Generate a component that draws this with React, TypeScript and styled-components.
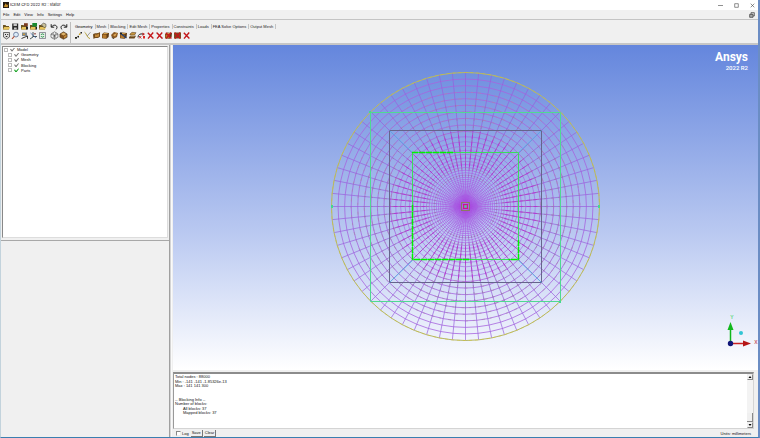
import React from "react";
import styled, { createGlobalStyle } from "styled-components";

const GlobalStyle = createGlobalStyle`
  *, *::before, *::after { box-sizing: border-box; }
  html, body, #root { height: 100%; margin: 0; }
  body {
    font: 4px/5px "Liberation Sans", Arial, sans-serif;
    color: #111;
    background: #f0f0f0;
    overflow: hidden;
  }
  button { font: inherit; color: inherit; background: none; border: 0; padding: 0; }
`;

const Window = styled.div`
  display: flex;
  flex-direction: column;
  height: 100vh;
  background: #f0f0f0;
  border-left: 1px solid #c3d3dc;
  border-right: 2px solid #6b8dc4;
  border-bottom: 1px solid #3b7fb0;
`;

const TitleBar = styled.header`
  display: flex;
  align-items: center;
  gap: 1px;
  height: 10px;
  padding: 0 3px 0 2px;
  background: #fff;
`;

const Title = styled.h1`
  flex: 1;
  margin: 0;
  font: 400 4px/6px Inter, sans-serif;
`;

const WindowButtons = styled.div`
  display: flex;
  gap: 11px;
`;

const WindowButton = styled.button`
  width: 5px;
  height: 6px;
  svg { display: block; width: 5px; height: 5px; }
`;

const MenuBar = styled.nav`
  display: flex;
  align-items: center;
  gap: 4px;
  height: 10px;
  padding: 0 3px 0 2px;
  border-bottom: 1px solid #c4c4c4;
  > :last-child { margin-left: auto; }
`;

const ToolArea = styled.div`
  display: flex;
  height: 25px;
  padding-top: 2px;
  border-bottom: 2px solid #c6c6c6;
`;

const QuickTools = styled.div`
  display: flex;
  gap: 3px;
  width: 70px;
  padding: 0 0 0 1px;
  border-right: 1px solid #bdbdbd;
`;

const ToolGrid = styled.div<{ $columns: number }>`
  display: grid;
  grid-template-columns: repeat(${(p) => p.$columns}, 9px);
  grid-auto-rows: 9px;
`;

const ToolButton = styled.button`
  width: 9px;
  height: 9px;
  svg { display: block; width: 9px; height: 9px; }
`;

const Ribbon = styled.div`
  display: flex;
  flex-direction: column;
  flex: 1;
  padding-left: 3px;
`;

const Tabs = styled.div`
  display: flex;
  align-items: center;
  height: 9px;
`;

const Tab = styled.button<{ $active?: boolean }>`
  padding: 0 2px 0 1px;
  border-right: 1px solid #c4c4c4;
  color: ${(p) => (p.$active ? "#000" : "#222")};
`;

const RibbonTools = styled.div`
  display: flex;
`;

const Main = styled.div`
  flex: 1;
  min-height: 0;
  display: grid;
  grid-template-columns: 168px 3px minmax(0, 1fr);
`;

const Side = styled.aside`
  display: flex;
  flex-direction: column;
`;

const TreePanel = styled.div`
  flex: 0 0 49%;
  padding: 0 1px;
  margin: 1px 1px 0 1px;
  background: #fff;
  border: 1px solid #ddd;
  border-left-color: #888;
  border-top-color: #888;
`;

const SideSplit = styled.div`
  height: 1px;
  margin-top: 2px;
  background: #a8a8a8;
`;

const Tree = styled.ul`
  display: grid;
  grid-auto-rows: 1fr;
  height: 26px;
  margin: 0;
  padding: 0;
  list-style: none;
`;

const TreeRow = styled.li<{ $level: number }>`
  display: flex;
  align-items: center;
  gap: 2px;
  padding-left: ${(p) => p.$level * 4}px;
`;

const Expander = styled.button`
  width: 4px;
  height: 4px;
  border: 1px solid #bbb;
`;

const TreeLabel = styled.label`
  display: flex;
  align-items: center;
  gap: 2px;
`;

const TreeCheck = styled.input<{ $green?: boolean }>`
  appearance: none;
  width: 5px;
  height: 4px;
  margin: 0;
  &::before {
    content: "";
    display: block;
    width: 5px;
    height: 4px;
    background: ${(p) => (p.$green ? "#12a01e" : "#777")};
    clip-path: polygon(0 40%, 20% 30%, 40% 65%, 85% 0, 100% 10%, 45% 100%, 35% 100%);
  }
`;

const Sash = styled.div`
  border-left: 1px solid #a0a0a0;
  border-right: 1px solid #fafafa;
  background: #d5d5d5;
`;

const Work = styled.section`
  display: flex;
  flex-direction: column;
  min-width: 0;
  padding-left: 1px;
`;

const Viewport = styled.div`
  position: relative;
  flex: 1;
  min-height: 0;
  background: linear-gradient(#6486dd, #bac9f1 58%, #fff);
`;

const Scene = styled.svg`
  display: block;
  width: 100%;
  height: 100%;
`;

const Brand = styled.div`
  position: absolute;
  top: 5px;
  right: 10px;
  color: #fff;
  text-align: right;
  font: 500 6px/8px Roboto, sans-serif;
  strong { display: block; font-size: 12px; font-weight: 700; line-height: 14px; }
`;

const Console = styled.div`
  display: flex;
  height: 57px;
  margin-right: 4px;
  margin-top: 2px;
  background: #fff;
  border: 1px solid #d4d4d4;
  border-top: 2px solid #8c8c8c;
  border-left-color: #999;
`;

const Log = styled.div`
  flex: 1;
  display: grid;
  grid-auto-rows: 1fr;
  height: 41px;
  padding-left: 1px;
  margin-top: 1px;
`;

const LogLine = styled.div<{ $indent?: boolean }>`
  min-height: 0;
  padding-left: ${(p) => (p.$indent ? 8 : 0)}px;
  white-space: pre;
  line-height: 4px;
`;

const ScrollBar = styled.div`
  display: flex;
  flex-direction: column;
  width: 6px;
  background: #f3f3f3;
`;

const ScrollArrow = styled.button`
  height: 6px;
  border: 1px solid #eee;
  border-right-color: #888;
  border-bottom-color: #888;
  svg { display: block; width: 4px; height: 4px; }
`;

const ScrollThumb = styled.div`
  height: 9px;
  margin-top: auto;
  background: #f0f0f0;
  border-right: 1px solid #888;
  border-bottom: 1px solid #888;
`;

const StatusBar = styled.footer`
  display: flex;
  align-items: center;
  gap: 1px;
  height: 8px;
  padding: 0 7px 0 3px;
`;

const LogLabel = styled.label`
  display: flex;
  align-items: center;
  gap: 1px;
  margin-right: 1px;
`;

const LogCheck = styled.input`
  appearance: none;
  width: 5px;
  height: 5px;
  margin: 0;
  background: #fff;
  border: 1px solid #eee;
  border-top-color: #888;
  border-left-color: #888;
`;

const SmallButton = styled.button`
  height: 7px;
  padding: 0 1px;
  border-right: 1px solid #777;
  border-bottom: 1px solid #777;
`;

const Units = styled.span`
  margin-left: auto;
`;

const folder = (
  <>
    <path d="M1 3h2.5l.7 1H7v3.5H1z" fill="#6b5420" />
    <path d="M2.2 5H8L7 7.5H1z" fill="#e6c35a" />
  </>
);
const block = (
  <>
    <path d="M1 3.2 3 1.6l5 .3-.4 4L5.6 7.8 1 7.2z" fill="#5d3a15" />
    <path d="M1.5 3.4h4v3.8l-4-.3z" fill="#b77a2c" />
    <path d="M1.8 3 3.2 2l4.2.2L5.8 3z" fill="#dba850" />
  </>
);
const cross = <path d="m1.8 1.8 5.6 5.8M7.2 1.5 2 7.6" stroke="#c4161a" strokeWidth="1.4" fill="none" />;

const icons: Record<string, React.ReactNode> = {
  open: folder,
  save: (
    <>
      <path d="M1.2 1.5h6v6.2h-6z" fill="#292929" />
      <path d="M2.5 1.5h3.4v2.4H2.5zM3 5.5h2.7v2H3z" fill="#c8c8c8" />
    </>
  ),
  geometryFile: (
    <>
      {folder}
      <path d="M4 1.2h3.8v3H4z" fill="#7a3b20" />
      <path d="M6 4.5h2v3H6z" fill="#222" />
    </>
  ),
  meshFile: (
    <>
      {folder}
      <path d="M3.3 1h4.7v3.6H3.3z" fill="#188a30" />
      <path d="M6.5 4.8H8v2.7H6.5z" fill="#222" />
    </>
  ),
  blockFile: (
    <>
      {folder}
      <path d="m3.5 2.5 2-1.4L8 2.2v2.6l-2 .9z" fill="#c9c19a" stroke="#333" strokeWidth=".5" />
    </>
  ),
  undo: <path d="M1.2 2.2v3h3M1.5 5c2-3 5.5-2 5.5.5 0 1-.5 1.5-1.2 2" fill="none" stroke="#222" strokeWidth="1" />,
  redo: <path d="M7.8 2.2v3h-3M7.5 5C5.5 2 2 3 2 5.5c0 1 .5 1.5 1.2 2" fill="none" stroke="#222" strokeWidth="1" />,
  fit: (
    <>
      <path d="M1.5 1.5h6v4.5l-3 2-3-2z" fill="#ddd" stroke="#333" strokeWidth=".7" />
      <path d="M3 3h1v1H3zM5.2 3h1v1h-1zM3.8 5h1.5v1H3.8z" fill="#222" />
    </>
  ),
  zoom: (
    <>
      <circle cx="5" cy="3.6" r="2.4" fill="#dcebf7" stroke="#5b6e93" strokeWidth=".8" />
      <path d="M3.3 5.4 1 8" stroke="#b04a30" strokeWidth="1.1" />
    </>
  ),
  measure: (
    <>
      <path d="M2 1.5h5v3.5H2z" fill="#7d8891" />
      <path d="M1.5 7.5 7.5 5v2.8" stroke="#222" fill="none" strokeWidth=".9" />
      <path d="M3 2.5h2v1.5H3z" fill="#c8963d" />
    </>
  ),
  axes: (
    <>
      <path d="M4 1v5l-3 2M4 5.5h4" stroke="#233" fill="none" strokeWidth=".8" />
      <path d="m1.5 2 5.5 5" stroke="#375fa5" strokeWidth=".7" />
      <path d="M5 2h2v1.5H5z" fill="#a77" />
    </>
  ),
  refresh: (
    <>
      <path d="M1.5 1.5h6v6h-6z" fill="#e6efe6" stroke="#556" strokeWidth=".6" />
      <path d="M3 4c.5-1.5 2.5-1.5 3 0M6 5c-.5 1.5-2.5 1.5-3 0" stroke="#1a8a3d" fill="none" strokeWidth=".9" />
    </>
  ),
  wire: (
    <path
      d="m4.5.8 3.4 2.1v3.4L4.5 8.3 1 6.3V3zM1 3l3.5 1.8L7.9 3M4.5 4.8v3.4M2.7 1.9l3.6 5.3M6.3 1.9 2.7 7.2"
      fill="#f4f4f4"
      stroke="#444"
      strokeWidth=".6"
    />
  ),
  solid: (
    <>
      <path d="m4.5.8 3.6 2.1v3.4L4.5 8.3.9 6.3V3z" fill="#80511e" stroke="#3d2a13" strokeWidth=".5" />
      <path d="m4.5 1.4 2.6 1.5-2.6 1.6-2.7-1.5z" fill="#dfb46b" />
      <path d="m5 5.3 2.5-1.5v2L5 7.3z" fill="#c78e3c" />
    </>
  ),
  point: (
    <>
      <path d="m2 7 4.5-5" stroke="#777" strokeWidth=".6" strokeDasharray="1 .7" />
      <path d="M1 6h2v1.7H1zM3.5 5H5v1.5H3.5z" fill="#25251c" />
      <path d="M5 2.5h1.5V4H5z" fill="#d8ad20" />
      <path d="M6.5 1H8v1.6H6.5z" fill="#222" />
    </>
  ),
  curve: (
    <>
      <path d="M1.5 1.2c2 .5 2 5.5 5.5 6.5" stroke="#b09a2c" strokeWidth=".9" fill="none" />
      <path d="M7.5 1.2 4.2 5" stroke="#777" strokeWidth=".7" />
    </>
  ),
  surface: (
    <>
      <path d="M1 3.5C3 1 5 3.5 8 1v4.5C6 8.2 3 6 1.5 8z" fill="#70491c" />
      <path d="M3 3.5C5 4 6 3.2 7 2.6v2.7C5.5 6.5 4 5.7 3 6.2z" fill="#c58b3b" />
    </>
  ),
  body: block,
  faceted: (
    <>
      <path d="m1 4 3-3 4 1-1 4-4 2z" fill="#8a5822" />
      <path d="m3 4 4-2-2 3.5z" fill="#e0ab58" />
      <path d="M1.5 6 4 7.8" stroke="#444" strokeWidth=".8" />
    </>
  ),
  repair: (
    <>
      {block}
      <path d="m1 2 6.5 5" stroke="#27426e" strokeWidth="1.4" />
      <path d="M1 1.5h2V3H1z" fill="#222" />
    </>
  ),
  transform: (
    <>
      <path d="m1 6 2-1.5 5 .3L6.5 7.5H1z" fill="#6a461d" />
      <path d="m2 3 2-1.7 4 .4L6.5 4H2z" fill="#c9963f" stroke="#4c3518" strokeWidth=".5" />
      <path d="M2.5 5h4" stroke="#f1dca0" strokeWidth=".7" />
    </>
  ),
  restore: (
    <>
      <path d="M1 6.5c0-3 2-4 5-3.5" stroke="#222" strokeWidth="1" fill="none" />
      <path d="m2 5 2.3 2.5M4.3 5 2 7.5" stroke="#b22" strokeWidth=".9" />
      <path d="M5.5 1.5 8 3 5.5 5z" fill="#b22" />
      <path d="M6 5h2v2.5H6z" fill="#d22" />
    </>
  ),
  deletePoint: cross,
  deleteCurve: (
    <>
      <path d="M1 1.5c3 .5 3 5 7 6" stroke="#777" strokeWidth=".6" fill="none" />
      {cross}
    </>
  ),
  deleteSurface: (
    <>
      {block}
      {cross}
    </>
  ),
  deleteBody: (
    <>
      <path d="M1 1.5h7v6H1z" fill="#7a4b20" />
      {cross}
    </>
  ),
  deleteAny: cross,
  app: (
    <>
      <path d="M0 0h9v9H0z" fill="#241b12" />
      <path d="m1 7 3-5 2 3 2-2-1 5z" fill="#c9922b" />
    </>
  ),
  windows: (
    <>
      <path d="M3 1h5v5H3z" fill="#ddd" stroke="#333" strokeWidth="1" />
      <path d="M1 3.5h5V8H1z" fill="#aaa" stroke="#333" strokeWidth="1" />
    </>
  ),
};

const Glyph = styled.svg`
  flex: none;
  width: 6px;
  height: 6px;
`;

function Tool({ name }: { name: string }) {
  return (
    <ToolButton type="button" aria-label={name}>
      <svg viewBox="0 0 9 9" aria-hidden="true">{icons[name]}</svg>
    </ToolButton>
  );
}

const menus = ["File", "Edit", "View", "Info", "Settings", "Help"];
const tabs = ["Geometry", "Mesh", "Blocking", "Edit Mesh", "Properties", "Constraints", "Loads", "FEA Solve Options", "Output Mesh"];
const fileTools = ["open", "save", "geometryFile", "meshFile", "blockFile", "fit", "zoom", "measure", "axes", "refresh"];
const viewTools = ["undo", "redo", "wire", "solid"];
const geometryTools = ["point", "curve", "surface", "body", "faceted", "repair", "transform", "restore", "deletePoint", "deleteCurve", "deleteSurface", "deleteBody", "deleteAny"];
const treeItems = ["Model", "Geometry", "Mesh", "Blocking", "Parts"];
const logLines = [
  "Total nodes : 88000",
  "Min : -141 -141 -1.85326e-13",
  "Max : 141 141 300",
  "",
  "",
  "-- Blocking Info --",
  "Number of blocks:",
  "  All blocks: 37",
  "  Mapped blocks: 37",
];

const CX = 292.5;
const CY = 161.5;
const OUTER = 134;
const INNER = 75;
const outerRings = Array.from({ length: 9 }, (_, i) => INNER + (i * (OUTER - INNER)) / 9);
const innerRings = Array.from({ length: 40 }, (_, i) => INNER * Math.pow(0.93, i + 1));
const spokes = Array.from({ length: 64 }, (_, i) => (i * Math.PI) / 32);

const spokePath = (from: number, to: number) =>
  spokes
    .map((a) => {
      const c = Math.cos(a);
      const s = Math.sin(a);
      return `M${CX + c * from} ${CY + s * from}L${CX + c * to} ${CY + s * to}`;
    })
    .join("");

function MeshScene() {
  return (
    <Scene viewBox="0 0 585 325" role="img" aria-label="Circular block mesh">
      <g fill="none">
        <g stroke="#a765de" strokeWidth=".8">
          {outerRings.map((r) => (
            <circle key={r} cx={CX} cy={CY} r={r} />
          ))}
        </g>
        <g stroke="#a889ad" strokeWidth=".7" strokeDasharray="2 5 3 7">
          {outerRings.slice(0, 7).map((r) => (
            <circle key={r} cx={CX} cy={CY} r={r} />
          ))}
        </g>
        <g stroke="#a25ee4" strokeWidth=".6">
          {innerRings.map((r) => (
            <circle key={r} cx={CX} cy={CY} r={r} />
          ))}
        </g>
        <path d={spokePath(INNER, OUTER)} stroke="#985fdd" strokeWidth=".7" />
        <path d={spokePath(3, 36)} stroke="#ad45dc" strokeWidth=".5" />
        <path d={spokePath(36, INNER)} stroke="#ad3fd2" strokeWidth=".7" />
        <path d={spokePath(30, 105)} stroke="#967c9d" strokeWidth=".6" strokeDasharray="2 5" />
        <path d={spokePath(40, 76)} stroke="#b52ac8" strokeWidth=".7" strokeDasharray="4 3" />
        <circle cx={CX} cy={CY} r={OUTER} stroke="#b5b66b" strokeWidth="1" />
        <circle cx={CX} cy={CY} r={OUTER} stroke="#d0c22e" strokeWidth=".5" strokeDasharray="3 3" />
        <path d="M197.5 67.5h190v189h-190z" stroke="#50d992" />
        <path d="M216.5 85.5h152v152h-152z" stroke="#66648c" />
        <path d="m216.5 85.5 23 22M368.5 85.5l-23 22M368.5 237.5l-23-22M216.5 237.5l23-22" stroke="#4eb8ea" strokeWidth=".8" />
        <path d="M239.5 107.5h106v107h-106z" stroke="#3bdc5c" />
        <path d="M239 107.5h42M345.5 195v19.5h-10M239.5 160v54.5h58" stroke="#00f000" strokeWidth="1.5" strokeDasharray="6 1" />
        <circle cx={CX} cy={CY} r="12" fill="#a33fe3" fillOpacity=".15" />
        <rect x={CX - 4} y={CY - 4} width="8" height="8" stroke="#8a7a63" />
        <rect x={CX - 2} y={CY - 2} width="4" height="4" stroke="#ce148d" fill="#a65cb5" />
      </g>
      <g fill="#45d98d">
        <path d="M158 160h2v3h-2zM425 160h2v3h-2zM291.5 160.5h2v2h-2zM196 66h2v2h-2zM386 256h2v2h-2z" />
      </g>
      <path d="M557.5 298v-14" stroke="#11b81c" strokeWidth="1.5" />
      <path d="m557.5 277-3 8h6z" fill="#11b81c" />
      <path d="M558 298.5h13" stroke="#c92020" strokeWidth="1.5" />
      <path d="m578 298.5-8-3v6z" fill="#b51616" />
      <circle cx="557.5" cy="298.5" r="2.7" fill="#101578" />
      <circle cx="568" cy="288" r="2" fill="#31c5d4" />
      <g fontFamily="Liberation Sans, Arial, sans-serif" fontSize="5" fontWeight="700" textAnchor="middle">
        <text x="559" y="274" fill="#68d987">Y</text>
        <text x="583" y="299" fill="#c4616b">X</text>
      </g>
    </Scene>
  );
}

export default function App() {
  return (
    <Window>
      <GlobalStyle />
      <TitleBar>
        <Glyph viewBox="0 0 9 9" aria-hidden="true">{icons.app}</Glyph>
        <Title>ICEM CFD 2022 R2 : stator</Title>
        <WindowButtons>
          {["M0 2.5h5", "M.7.7h3.6v3.6H.7z", "m.7.7 3.6 3.6m0-3.6L.7 4.3"].map((d, i) => (
            <WindowButton key={d} type="button" aria-label={["Minimize", "Maximize", "Close"][i]}>
              <svg viewBox="0 0 5 5"><path d={d} fill="none" stroke="#444" strokeWidth=".6" /></svg>
            </WindowButton>
          ))}
        </WindowButtons>
      </TitleBar>
      <MenuBar>
        {menus.map((m) => (
          <button key={m} type="button">{m}</button>
        ))}
        <Glyph viewBox="0 0 9 9" aria-hidden="true">{icons.windows}</Glyph>
      </MenuBar>
      <ToolArea>
        <QuickTools>
          <ToolGrid $columns={5}>{fileTools.map((t) => <Tool key={t} name={t} />)}</ToolGrid>
          <ToolGrid $columns={2}>{viewTools.map((t) => <Tool key={t} name={t} />)}</ToolGrid>
        </QuickTools>
        <Ribbon>
          <Tabs role="tablist">
            {tabs.map((t, i) => (
              <Tab key={t} type="button" role="tab" aria-selected={i === 0} $active={i === 0}>{t}</Tab>
            ))}
          </Tabs>
          <RibbonTools>{geometryTools.map((t) => <Tool key={t} name={t} />)}</RibbonTools>
        </Ribbon>
      </ToolArea>
      <Main>
        <Side>
          <TreePanel>
            <Tree>
              {treeItems.map((t, i) => (
                <TreeRow key={t} $level={i === 0 ? 0 : 1}>
                  <Expander type="button" aria-label={`Expand ${t}`} />
                  <TreeLabel>
                    <TreeCheck type="checkbox" defaultChecked $green={t === "Parts"} />
                    {t}
                  </TreeLabel>
                </TreeRow>
              ))}
            </Tree>
          </TreePanel>
          <SideSplit />
        </Side>
        <Sash />
        <Work>
          <Viewport>
            <MeshScene />
            <Brand><strong>Ansys</strong>2022 R2</Brand>
          </Viewport>
          <Console>
            <Log>
              {logLines.map((l, i) => (
                <LogLine key={i} $indent={l.startsWith("  ")}>{l.trim()}</LogLine>
              ))}
            </Log>
            <ScrollBar>
              <ScrollArrow type="button" aria-label="Scroll up">
                <svg viewBox="0 0 4 4"><path d="m2 1 1.5 2h-3z" /></svg>
              </ScrollArrow>
              <ScrollThumb />
              <ScrollArrow type="button" aria-label="Scroll down">
                <svg viewBox="0 0 4 4"><path d="m2 3 1.5-2h-3z" /></svg>
              </ScrollArrow>
            </ScrollBar>
          </Console>
          <StatusBar>
            <LogLabel><LogCheck type="checkbox" />Log</LogLabel>
            <SmallButton type="button">Save</SmallButton>
            <SmallButton type="button">Clear</SmallButton>
            <Units>Units: millimeters</Units>
          </StatusBar>
        </Work>
      </Main>
    </Window>
  );
}
